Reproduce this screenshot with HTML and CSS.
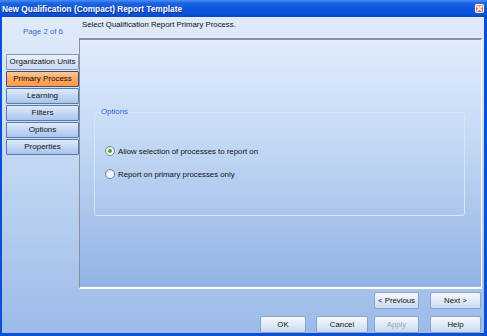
FILE: index.html
```html
<!DOCTYPE html>
<html>
<head>
<meta charset="utf-8">
<link rel="stylesheet" href="styles.css">
</head>
<body>
<div class="window">
  <div class="titlebar">
    <span class="title">New Qualification (Compact) Report Template</span>
    <span class="close"><svg width="9" height="9" viewBox="0 0 9 9"><path d="M2.5 2.5 L6.5 6.5 M6.5 2.5 L2.5 6.5" stroke="#fff" stroke-width="1.6" stroke-linecap="square"/></svg></span>
  </div>
  <div class="client">
    <div class="main">
      <div class="side">
        <div class="page">Page 2 of 6</div>
        <div class="nav">
          <div class="navbtn first">Organization Units</div>
          <div class="navbtn active">Primary Process</div>
          <div class="navbtn">Learning</div>
          <div class="navbtn">Filters</div>
          <div class="navbtn">Options</div>
          <div class="navbtn">Properties</div>
        </div>
      </div>
      <div class="content">
        <div class="heading">Select Qualification Report Primary Process.</div>
        <div class="panel">
          <div class="group">
            <div class="legend">Options</div>
            <div class="radios">
              <div class="radio-row"><span class="radio checked"></span><span>Allow selection of processes to report on</span></div>
              <div class="radio-row"><span class="radio"></span><span>Report on primary processes only</span></div>
            </div>
          </div>
        </div>
      </div>
    </div>
    <div class="btnrow row1">
      <div class="btn w45">&lt; Previous</div>
      <div class="btn w51 gap11">Next &gt;</div>
    </div>
    <div class="btnrow row2">
      <div class="btn w46">OK</div>
      <div class="btn w52 gap10">Cancel</div>
      <div class="btn w45 gap6 disabled">Apply</div>
      <div class="btn w51 gap11">Help</div>
    </div>
  </div>
</div>
</body>
</html>
```
FILE: styles.css
```css
html, body {
  margin: 0;
  padding: 0;
  width: 487px;
  height: 336px;
  overflow: hidden;
  font-family: "Liberation Sans", Arial, sans-serif;
  font-size: 7.8px;
  color: #1a1a1a;
}
.window {
  width: 487px;
  height: 336px;
  display: flex;
  flex-direction: column;
  box-sizing: border-box;
  background: #0a4fd6;
}
.titlebar {
  height: 17px;
  flex: none;
  display: flex;
  align-items: center;
  justify-content: space-between;
  padding: 0 3px 0 2px;
  background: linear-gradient(#4a8ef2 0%, #1d64e4 18%, #0b58de 50%, #0954da 80%, #0848c6 100%);
}
.title {
  color: #fff;
  font-weight: bold;
  font-size: 8.3px;
  text-shadow: 1px 1px 0 #0a2a8a;
}
.close {
  width: 9px;
  height: 9px;
  border-radius: 2px;
  background: linear-gradient(#f0907a, #e0502a);
  box-shadow: 0 0 0 1px #fff inset;
  display: flex;
}
.client {
  flex: 1;
  margin: 0 3px 3px 2px;
  background: linear-gradient(#e0ebfb 0%, #c6daf5 40%, #9cbbe8 100%);
  display: flex;
  flex-direction: column;
}
.main {
  display: flex;
  height: 272px;
}
.side {
  width: 77px;
  flex: none;
  padding-left: 4px;
  box-sizing: border-box;
}
.page {
  color: #3a6ad0;
  height: 20px;
  margin-top: 9px;
  padding-left: 17px;
  line-height: 12px;
}
.nav {
  margin-top: 8px;
  display: flex;
  flex-direction: column;
}
.navbtn {
  height: 14px;
  width: 71px;
  margin-bottom: 1px;
  border: 1px solid #5d79a8;
  border-radius: 1px;
  background: linear-gradient(#dfeafb 0%, #c3d7f4 50%, #a9c4ee 100%);
  text-align: center;
  line-height: 14px;
  color: #111;
  font-size: 8px;
}
.navbtn.first {
  border-color: #8a98ae;
  background: linear-gradient(#eaf1fc, #c7d9f4);
}
.navbtn.active {
  border-color: #3a4f7a;
  background: linear-gradient(#ffc996 0%, #ffa860 50%, #ff9a48 100%);
}
.content {
  flex: 1;
  display: flex;
  flex-direction: column;
}
.heading {
  height: 21px;
  padding-left: 3px;
  line-height: 16px;
  color: #111;
}
.panel {
  flex: 1;
  border-top: 2px solid #8a8f98;
  border-left: 1px solid #8a8f98;
  border-right: 1px solid #fff;
  border-bottom: 2px solid #fff;
  margin-right: 2px;
  background: linear-gradient(#e0ebfb 0%, #c4d9f5 40%, #92b3e4 100%);
  padding: 72px 14px 0 14px;
}
.group {
  position: relative;
  height: 104px;
  width: 371px;
  border: 1px solid #dbe5f2;
  border-radius: 3px;
  box-sizing: border-box;
}
.legend {
  position: absolute;
  top: -6px;
  left: 4px;
  padding: 0 2px;
  color: #2b5de6;
  line-height: 10px;
}
.radios {
  padding: 33px 0 0 10px;
  display: flex;
  flex-direction: column;
  gap: 13px;
}
.radio-row {
  display: flex;
  align-items: center;
  gap: 3px;
  height: 10px;
  color: #111;
}
.radio {
  width: 8px;
  height: 8px;
  border: 1px solid #7886a2;
  border-radius: 50%;
  background: radial-gradient(circle at 60% 65%, #ffffff 0%, #f2f4f8 50%, #d0d6e2 100%);
  display: inline-block;
  position: relative;
}
.radio.checked::after {
  content: "";
  position: absolute;
  left: 2px;
  top: 2px;
  width: 4px;
  height: 4px;
  border-radius: 50%;
  background: #2fb12f;
}
.btnrow {
  display: flex;
  justify-content: flex-end;
  padding-right: 3px;
}
.row1 {
  margin-top: 3px;
  height: 17px;
}
.row2 {
  margin-top: 7px;
  height: 17px;
}
.btn {
  height: 17px;
  box-sizing: border-box;
  border: 1px solid #8da3c6;
  border-radius: 2px;
  background: linear-gradient(#f4f8fe 0%, #e1ebf9 50%, #c8d9f1 100%);
  text-align: center;
  line-height: 15px;
  color: #111;
}
.btn.disabled { color: #9aa4b4; }
.w45 { width: 45px; }
.w46 { width: 46px; }
.w51 { width: 51px; }
.w52 { width: 52px; }
.gap6 { margin-left: 6px; }
.gap10 { margin-left: 10px; }
.gap11 { margin-left: 11px; }
```
